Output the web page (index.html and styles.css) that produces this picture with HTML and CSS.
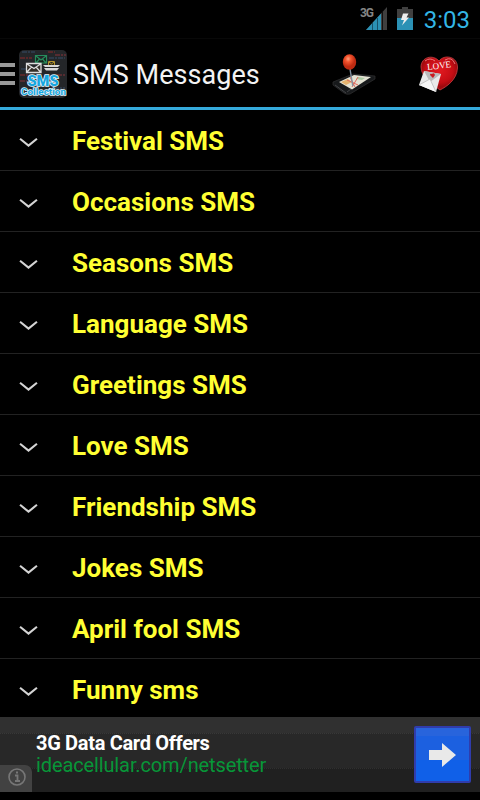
FILE: index.html
```html
<!DOCTYPE html>
<html lang="en">
<head>
    <meta charset="UTF-8">
    <meta name="viewport" content="width=device-width, initial-scale=1.0">
    <title>SMS Messages</title>
    <link rel="stylesheet" href="styles.css">
</head>
<body>

    <div class="status-bar">
        <svg class="signal" width="28" height="30" viewBox="0 0 28 30">
            <text x="0" y="17" class="network" textLength="14">3G</text>
            <path d="M6 30L27 7V30Z" fill="#3f3f3f"/>
            <path d="M6 30L21 13.500V30Z" fill="#2b91b5"/>
            <path d="M12.500 23V30M17.500 18V30" stroke="#16516a" stroke-width="1"/>
            <path d="M22.500 12V30" stroke="#111" stroke-width="1"/>
        </svg>
        <svg class="battery" width="16" height="24" viewBox="0 0 16 24">
            <path d="M5 0H11V2H16V12H0V2H5Z" fill="#404040"/>
            <path d="M0 11H16V23H0Z" fill="#2b91b5"/>
            <path d="M6 6.500H11.500L9.500 10.500H12L5 18.500L7 13H4Z" fill="#eee"/>
        </svg>
        <span class="clock">3:03</span>
    </div>

    <header>
        <div class="menu-icon"></div>
        <svg class="app-icon" width="48" height="48" viewBox="0 0 48 48">
            <rect width="48" height="48" rx="5" fill="#242629"/>
            <g stroke-width="2" stroke-dasharray="5 1 2 1" opacity=".6">
                <path d="M1 8H13M29 2H36M1 25H12M4 40H12" stroke="#7b2929"/>
                <path d="M3 2H16M30 8H46M2 19H8M35 38H46" stroke="#34475e"/>
                <path d="M36 5H47M38 25H47M1 31H8" stroke="#783137"/>
            </g>
            <path d="M16.500 5.500H27.500V13H16.500ZM17 6L22 10L27 6M17 13L20.500 9M27 13L23.500 9" fill="#16231d" stroke="#268c5b" stroke-width="1.200"/>
            <path d="M29.500 11.500H35.500V16H29.500ZM30 12L32.500 14L35 12" fill="#332d15" stroke="#b29430"/>
            <path d="M24 15H41L39 17H26ZM25 18H40L38 20.500H27Z" fill="#d8d8d8"/>
            <path d="M7.500 13.500H22V22.500H7.500ZM8 14L15 18.500L21.500 14M8 22L12.500 17M21.500 22L17 17" fill="#332e27" stroke="#ddd" stroke-width="1.300"/>
            <text x="8.500" y="36" class="logo-sms" textLength="31" lengthAdjust="spacingAndGlyphs">SMS</text>
            <text x="2" y="45" class="logo-collection" textLength="45" lengthAdjust="spacingAndGlyphs">Collection</text>
        </svg>
        <h1>SMS Messages</h1>
        <div class="actions">
            <svg width="52" height="50" viewBox="0 0 52 50">
                <defs>
                    <radialGradient id="pin" cx=".4" cy=".3">
                        <stop offset="0" stop-color="#ffa27d"/>
                        <stop offset=".4" stop-color="#f4552f"/>
                        <stop offset="1" stop-color="#bf2b12"/>
                    </radialGradient>
                </defs>
                <path d="M5 33L25 25L47 27V30L22 45Q19 46 16 44L5 36Z" fill="#17191b" stroke="#303132" stroke-width=".7"/>
                <path d="M11 33L26 26L43 28L24 40.500Z" fill="#e3e2d3"/>
                <path d="M13 33L20 30L24 33L18 36Z" fill="#e4b36f"/>
                <path d="M30 28L37 29L34 31L28 30Z" fill="#a9c9a2"/>
                <path d="M19 31L30 36M24 38L30 28M22 28L27 38" stroke="#e0695c"/>
                <path d="M7 36L18 44M19 43L23 40" stroke="#4d4e50" stroke-width=".8"/>
                <path d="M22 20L24.800 37" stroke="#8292a0" stroke-width="1.400"/>
                <ellipse cx="21.500" cy="13" rx="6.700" ry="7.700" fill="url(#pin)"/>
            </svg>
            <svg width="52" height="50" viewBox="0 0 52 50">
                <defs>
                    <radialGradient id="heart" cx=".5" cy=".4">
                        <stop offset="0" stop-color="#e31a20"/>
                        <stop offset=".75" stop-color="#c50d14"/>
                        <stop offset="1" stop-color="#9e090e"/>
                    </radialGradient>
                </defs>
                <path d="M28 41C20 35 9 28 9 18C9 8 21 5 27 12C32 5 46 7 45.500 19C45 31 34 38 28 41Z" fill="url(#heart)" stroke="#d8474b" stroke-width=".7"/>
                <path d="M13 12Q18 8 23 12M33 11Q40 7 43 15" fill="none" stroke="#ee7779" stroke-width="1"/>
                <text x="15.500" y="21" class="love" textLength="24" transform="rotate(-7 16 21)">LOVE</text>
                <path d="M12 22L29 25L24 43L7 36Z" fill="#e9e9e9"/>
                <path d="M12 22L29 25L18 33Z" fill="#b9b9b9"/>
                <path d="M7 36L18 30L24 43" fill="#f6f6f6" stroke="#b4b4b4" stroke-width=".7"/>
                <path d="M21 29L18 26Q18 24 20 25Q22 23 23 26Z" fill="#c91b21"/>
            </svg>
        </div>
    </header>

    <ul class="categories">
        <li><svg class="chevron" viewBox="0 0 18 10"><path d="M1 1.500L9 8L17 1.500"/></svg>Festival SMS</li>
        <li><svg class="chevron" viewBox="0 0 18 10"><path d="M1 1.500L9 8L17 1.500"/></svg>Occasions SMS</li>
        <li><svg class="chevron" viewBox="0 0 18 10"><path d="M1 1.500L9 8L17 1.500"/></svg>Seasons SMS</li>
        <li><svg class="chevron" viewBox="0 0 18 10"><path d="M1 1.500L9 8L17 1.500"/></svg>Language SMS</li>
        <li><svg class="chevron" viewBox="0 0 18 10"><path d="M1 1.500L9 8L17 1.500"/></svg>Greetings SMS</li>
        <li><svg class="chevron" viewBox="0 0 18 10"><path d="M1 1.500L9 8L17 1.500"/></svg>Love SMS</li>
        <li><svg class="chevron" viewBox="0 0 18 10"><path d="M1 1.500L9 8L17 1.500"/></svg>Friendship SMS</li>
        <li><svg class="chevron" viewBox="0 0 18 10"><path d="M1 1.500L9 8L17 1.500"/></svg>Jokes SMS</li>
        <li><svg class="chevron" viewBox="0 0 18 10"><path d="M1 1.500L9 8L17 1.500"/></svg>April fool SMS</li>
        <li><svg class="chevron" viewBox="0 0 18 10"><path d="M1 1.500L9 8L17 1.500"/></svg>Funny sms</li>
    </ul>

    <div class="ad">
        <div class="ad-text">
            <div class="ad-title">3G Data Card Offers</div>
            <div class="ad-url">ideacellular.com/netsetter</div>
        </div>
        <div class="ad-button">
            <svg width="27" height="24" viewBox="0 0 27 24">
                <path d="M0 7H13V0L27 12L13 24V17H0Z" fill="#e9e9e9"/>
            </svg>
        </div>
        <div class="ad-info">
            <svg width="18" height="18" viewBox="0 0 18 18">
                <circle cx="9" cy="9" r="8" fill="none" stroke="#777" stroke-width="1.600"/>
                <path d="M7 7.500H9.500V13M7 13H12M8 4.500H10" fill="none" stroke="#777" stroke-width="1.800"/>
            </svg>
        </div>
    </div>

</body>
</html>
```
FILE: styles.css
```css
* {
    margin: 0;
    padding: 0;
    box-sizing: border-box;
}

body {
    display: flex;
    flex-direction: column;
    width: 480px;
    height: 800px;
    overflow: hidden;
    background: #000;
    font-family: Roboto, sans-serif;
}

svg {
    display: block;
    flex-shrink: 0;
}

.status-bar {
    display: flex;
    justify-content: flex-end;
    height: 38px;
    padding-right: 10px;
}

.network {
    font-size: 12px;
    font-weight: bold;
    fill: #858585;
}

.battery {
    margin: 7px 11px 0 9px;
}

.clock {
    color: #33b5e5;
    font-size: 24px;
    line-height: 40px;
}

header {
    display: flex;
    align-items: center;
    height: 72px;
    padding-top: 2px;
    border-top: 1px solid #080808;
    border-bottom: 3px solid #35aadc;
}

.menu-icon {
    width: 15px;
    height: 22px;
    margin-right: 4px;
    border-top: 4px solid #999;
    border-bottom: 4px solid #999;
    background: linear-gradient(#999, #999) center / 100% 4px no-repeat;
}

.logo-sms {
    font-size: 15px;
    font-weight: 900;
    fill: #16a6df;
    stroke: #e3f5fc;
    stroke-width: 1.6px;
    paint-order: stroke;
}

.logo-collection {
    font-size: 9.5px;
    font-weight: bold;
    fill: #16a6df;
    stroke: #e3f5fc;
    stroke-width: 1.4px;
    paint-order: stroke;
}

h1 {
    margin-left: 6px;
    padding-top: 2px;
    color: #f3f3f3;
    font-size: 27px;
    font-weight: normal;
    letter-spacing: 0.05px;
    white-space: nowrap;
}

.actions {
    display: flex;
    gap: 32px;
    margin-left: auto;
    padding-right: 16px;
}

.love {
    font-family: "Liberation Serif", serif;
    font-size: 9px;
    fill: #fff;
}

.categories {
    height: 607px;
    overflow: hidden;
    list-style: none;
}

.categories li {
    display: flex;
    align-items: center;
    height: 61px;
    padding: 2px 0 0 19px;
    border-bottom: 1px solid #222;
    color: #ffff33;
    font-size: 26px;
    font-weight: bold;
}

.chevron {
    width: 19px;
    height: 11px;
    margin: 2px 34px 0 0;
    fill: none;
    stroke: #d4d4d4;
    stroke-width: 2;
}

.ad {
    display: flex;
    position: relative;
    height: 75px;
    padding: 9px 9px 0 36px;
    background:
        repeating-linear-gradient(90deg, #383838 0 1px, transparent 1px 2px) 0 16px / 100% 1px no-repeat,
        repeating-linear-gradient(90deg, #303030 0 1px, transparent 1px 2px) 0 51px / 100% 1px no-repeat,
        linear-gradient(#303030 0 16px, #282828 16px 51px, #202020 51px);
}

.ad-text {
    padding-top: 6px;
    font-size: 20px;
    line-height: 22px;
}

.ad-title {
    color: #fff;
    font-weight: bold;
    letter-spacing: -0.32px;
}

.ad-url {
    color: #079638;
    letter-spacing: -0.12px;
}

.ad-button {
    display: flex;
    align-items: center;
    justify-content: center;
    width: 57px;
    height: 57px;
    margin-left: auto;
    border: 2px solid #303cac;
    border-radius: 2px;
    background: linear-gradient(#2864dc 0 8px, #1c60e0 8px 32px, #1060e8 32px);
}

/* info tab in the corner of the ad */
.ad-info {
    position: absolute;
    left: 0;
    bottom: 0;
    width: 32px;
    height: 27px;
    padding: 3px 0 0 8px;
    border-radius: 0 7px 0 0;
    background: #424242;
}
```
